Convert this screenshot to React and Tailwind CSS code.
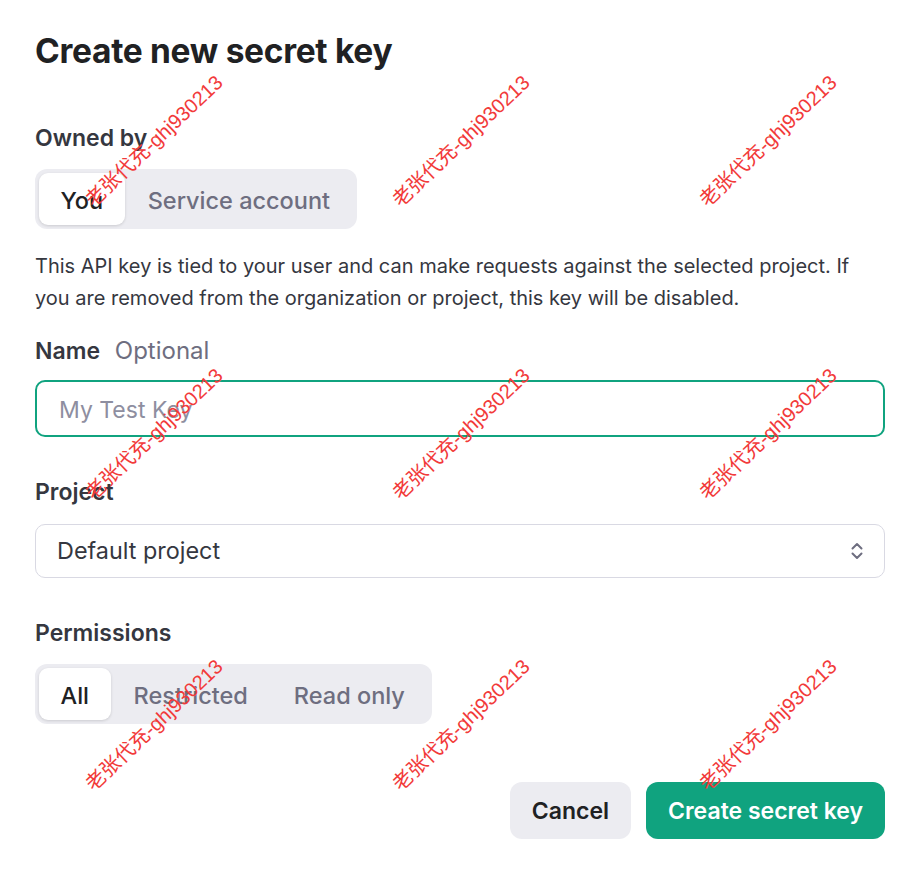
import React from 'react';

const marks = [
  'left-[154px] top-[141px]',
  'left-[461px] top-[141px]',
  'left-[768px] top-[141px]',
  'left-[154px] top-[434px]',
  'left-[461px] top-[434px]',
  'left-[768px] top-[434px]',
  'left-[154px] top-[725px]',
  'left-[461px] top-[725px]',
  'left-[768px] top-[725px]',
];

const Segmented = ({ options, active }) => (
  <div className="inline-flex h-[60px] p-[4px] rounded-[12px] bg-[#ececf1]">
    {options.map((opt) => (
      <div
        key={opt}
        className={
          opt === active
            ? 'flex items-center px-[21.5px] rounded-[9px] bg-white text-[#202123] shadow-[0_1px_3px_rgba(0,0,0,0.14)]'
            : 'flex items-center px-[23px] text-[#6e6e80]'
        }
      >
        <span className="pt-[3px] text-[23.5px] font-medium leading-none">{opt}</span>
      </div>
    ))}
  </div>
);

const Label = ({ children, className = '' }) => (
  <div className={`text-[23px] font-semibold leading-[30px] text-[#353740] ${className}`}>{children}</div>
);

export default function App() {
  return (
    <div className="relative w-[922px] h-[872px] overflow-hidden bg-white font-['Inter',sans-serif]">
      <div className="w-[850px] ml-[35px] pt-[31px] flex flex-col">
        <h1 className="text-[33.5px] font-bold leading-[40px] tracking-[-0.3px] text-[#202123]">Create new secret key</h1>

        <Label className="mt-[52px]">Owned by</Label>
        <div className="mt-[16px]">
          <Segmented options={['You', 'Service account']} active="You" />
        </div>

        <p className="mt-[21px] text-[20px] leading-[32px] text-[#353740]">
          This API key is tied to your user and can make requests against the selected project. If you are removed from the organization or project, this key will be disabled.
        </p>

        <Label className="mt-[22px]">
          Name <span className="ml-[9px] text-[24px] font-normal text-[#6e6e80]">Optional</span>
        </Label>
        <div className="mt-[14px] h-[57px] rounded-[10px] border-2 border-[#10a37f] px-[22px] pt-[3px] flex items-center">
          <span className="text-[23px] text-[#8e8ea0]">My Test Key</span>
        </div>

        <Label className="mt-[40px]">Project</Label>
        <div className="mt-[17px] h-[54px] rounded-[10px] border-[1.5px] border-[#d9d9e3] pl-[21px] pr-[20px] flex items-center justify-between">
          <span className="text-[23.4px] text-[#353740]">Default project</span>
          <svg width="14" height="20" viewBox="0 0 14 20" fill="none" stroke="#6e6e80" strokeWidth="2" strokeLinecap="round" strokeLinejoin="round">
            <path d="M2.5 7.5 7 3l4.5 4.5" />
            <path d="M2.5 12.5 7 17l4.5-4.5" />
          </svg>
        </div>

        <Label className="mt-[40px]">Permissions</Label>
        <div className="mt-[16px]">
          <Segmented options={['All', 'Restricted', 'Read only']} active="All" />
        </div>

        <div className="mt-[58px] flex justify-end gap-[15px]">
          <button className="h-[57px] px-[22px] pt-[2px] rounded-[12px] bg-[#ececf1] text-[23px] font-semibold text-[#202123]">Cancel</button>
          <button className="h-[57px] px-[22px] pt-[2px] rounded-[12px] bg-[#10a37f] text-[23px] font-semibold text-white">Create secret key</button>
        </div>
      </div>

      {marks.map((pos) => (
        <div
          key={pos}
          className={`pointer-events-none absolute ${pos} -translate-x-1/2 -translate-y-1/2 rotate-[-43.5deg] whitespace-nowrap text-[20px] leading-none text-[#f23a3a] font-['Liberation_Sans','Noto_Sans_CJK_SC',sans-serif]`}
        >
          老张代充-ghj930213
        </div>
      ))}
    </div>
  );
}
